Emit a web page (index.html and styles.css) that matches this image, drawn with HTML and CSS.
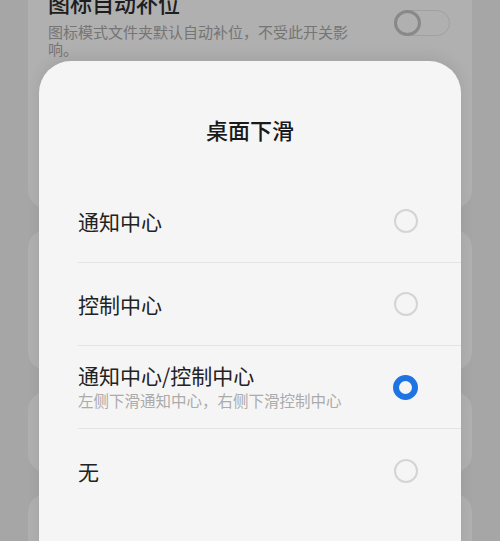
FILE: index.html
```html
<!DOCTYPE html>
<html lang="zh-CN">
<head>
<meta charset="UTF-8">
<meta name="viewport" content="width=device-width, initial-scale=1.0">
<title>桌面下滑</title>
<link rel="stylesheet" href="styles.css">
</head>
<body>
    <div class="page">
        <div class="card card-first">
            <div class="setting">
                <div class="setting-text">
                    <div class="setting-title">图标自动补位</div>
                    <div class="setting-desc">图标模式文件夹默认自动补位，不受此开关影响。</div>
                </div>
                <div class="toggle"><span class="knob"></span></div>
            </div>
        </div>
        <div class="card card-second"></div>
        <div class="card card-third"></div>
        <div class="card card-fourth"></div>
    </div>

    <div class="mask"></div>

    <div class="sheet">
        <h2 class="sheet-title">桌面下滑</h2>
        <ul class="options">
            <li class="option">
                <div class="option-text">
                    <div class="option-name">通知中心</div>
                </div>
                <span class="radio"></span>
            </li>
            <li class="option">
                <div class="option-text">
                    <div class="option-name">控制中心</div>
                </div>
                <span class="radio"></span>
            </li>
            <li class="option">
                <div class="option-text">
                    <div class="option-name">通知中心/控制中心</div>
                    <div class="option-desc">左侧下滑通知中心，右侧下滑控制中心</div>
                </div>
                <span class="radio checked"></span>
            </li>
            <li class="option">
                <div class="option-text">
                    <div class="option-name">无</div>
                </div>
                <span class="radio"></span>
            </li>
        </ul>
    </div>
</body>
</html>
```

FILE: styles.css
```css
html, body {
    margin: 0;
    padding: 0;
}
body {
    width: 500px;
    height: 541px;
    overflow: hidden;
    position: relative;
    background-color: #eeeef0;
    font-family: "Noto Sans CJK SC", "Noto Sans", sans-serif;
}
.page {
    padding: 0 28px;
}
.card {
    background-color: #fcfcfc;
    border-radius: 18px;
    margin-bottom: 22px;
}
.card-first {
    margin-top: -20px;
    height: 228px;
    border-radius: 0 0 18px 18px;
}
.card-second {
    height: 140px;
}
.card-third {
    height: 80px;
}
.card-fourth {
    height: 120px;
}
.setting {
    display: flex;
    align-items: flex-start;
    justify-content: space-between;
    padding: 7px 22px 0 20px;
}
.setting-text {
    width: 306px;
}
.setting-title {
    font-size: 22px;
    line-height: 30px;
    color: #2b2b2b;
    font-weight: 500;
}
.setting-desc {
    font-size: 15px;
    line-height: 17px;
    color: #a8a8a8;
    margin-top: 6px;
}
.toggle {
    width: 56px;
    height: 26px;
    margin-top: 23px;
    border: 1.5px solid #e6e6e6;
    border-radius: 14px;
    box-sizing: border-box;
    position: relative;
}
.knob {
    position: absolute;
    left: -1.5px;
    top: -1.5px;
    width: 27px;
    height: 26px;
    border: 3.5px solid #c4c4c4;
    border-radius: 50%;
    box-sizing: border-box;
}
.mask {
    position: absolute;
    left: 0;
    top: 0;
    right: 0;
    bottom: 0;
    background-color: rgba(0, 0, 0, 0.3);
}
.sheet {
    position: absolute;
    left: 39px;
    top: 61px;
    width: 422px;
    height: 520px;
    background-color: #f5f5f5;
    border-radius: 32px 32px 0 0;
    box-shadow: 0 -4px 14px rgba(0, 0, 0, 0.08);
}
.sheet-title {
    margin: 53px 0 0;
    text-align: center;
    font-size: 22px;
    line-height: 30px;
    font-weight: 500;
    color: #1a1a1a;
}
.options {
    list-style: none;
    margin: 36px 0 0 39px;
    padding: 0;
}
.option {
    height: 83px;
    display: flex;
    align-items: center;
    justify-content: space-between;
    padding-right: 43px;
    border-bottom: 1px solid #e3e3e3;
    box-sizing: border-box;
}
.option:last-child {
    border-bottom: none;
}
.option-name {
    font-size: 21px;
    line-height: 26px;
    color: #222;
}
.option-desc {
    font-size: 15.5px;
    line-height: 24px;
    color: #ababab;
}
.radio {
    width: 24px;
    height: 24px;
    border: 2px solid #d4d4d4;
    border-radius: 50%;
    box-sizing: border-box;
}
.radio.checked {
    width: 25px;
    height: 25px;
    border: 6px solid #1e74e2;
}
```
